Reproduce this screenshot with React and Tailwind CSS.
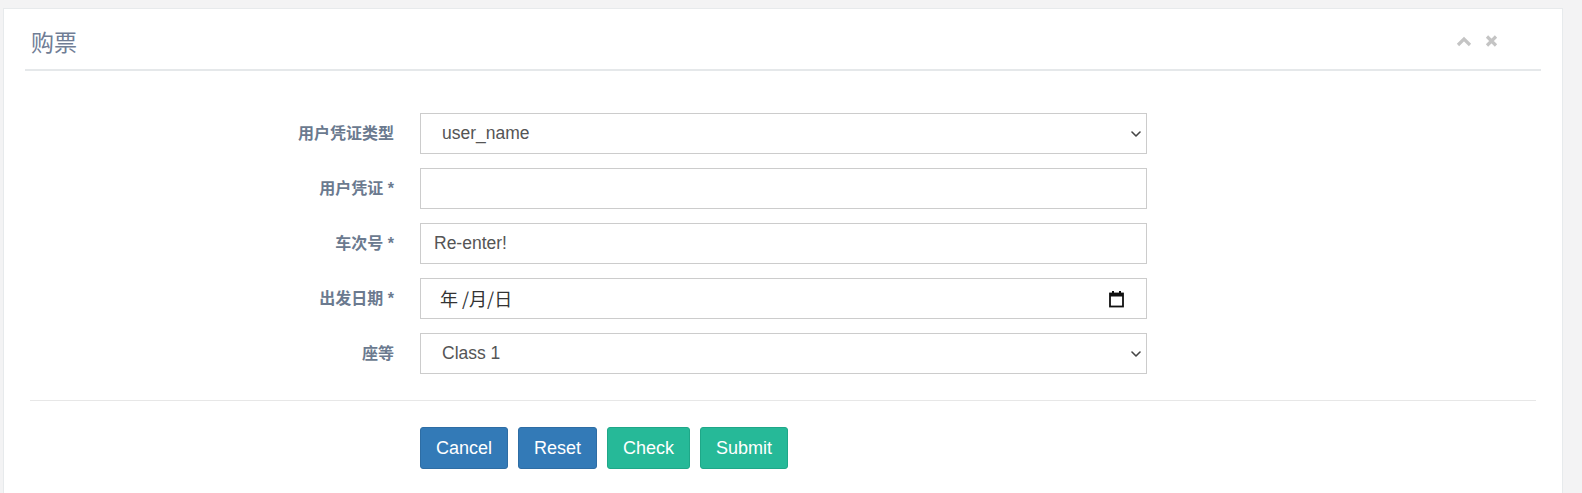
import React from "react";

const Chevron = () => (
  <svg width="10" height="6" viewBox="0 0 10 6" className="absolute right-[5px] top-1/2 -translate-y-1/2">
    <path d="M1 1 L5 5 L9 1" fill="none" stroke="#444" strokeWidth="1.6" strokeLinecap="round" strokeLinejoin="round" />
  </svg>
);

const Row = ({ label, children }) => (
  <div className="flex items-center">
    <div className="w-[390px] text-right text-[16px] font-bold text-[#6b7a8f]">{label}</div>
    <div className="ml-[26px] w-[727px]">{children}</div>
  </div>
);

const boxCls =
  "relative flex h-[41px] w-full items-center border border-[#cccccc] bg-white text-[17.5px] text-[#555555]";

const btnBlue =
  "h-[42px] rounded-[3px] border border-[#2e6da4] bg-[#337ab7] px-[15px] text-[18px] text-white";
const btnGreen =
  "h-[42px] rounded-[3px] border border-[#1fa788] bg-[#26b998] px-[15px] text-[18px] text-white";

export default function App() {
  return (
    <div
      className="min-h-[493px] bg-[#f3f3f4] pl-[3px] pr-[19px] pt-[8px]"
      style={{ fontFamily: '"Liberation Sans", "Noto Sans CJK SC", sans-serif' }}
    >
      <div className="h-[485px] border border-b-0 border-[#e7eaec] bg-white">
        {/* header */}
        <div className="mx-[21px] flex items-center justify-between border-b-2 border-[#e5e8ea] pb-[13px] pl-[6px] pr-[43px] pt-[17px]">
          <div className="text-[23px] leading-[30px] text-[#6f7d95]" style={{ fontFamily: '"Noto Sans CJK SC", sans-serif' }}>
            购票
          </div>
          <div className="flex items-center gap-[13px]">
            <svg width="16" height="11" viewBox="0 0 16 11">
              <path d="M2 9 L8 3 L14 9" fill="none" stroke="#c4c4c4" strokeWidth="3.2" strokeLinejoin="miter" />
            </svg>
            <svg width="13" height="12" viewBox="0 0 13 12">
              <path d="M2 1.5 L11 10.5 M11 1.5 L2 10.5" fill="none" stroke="#c4c4c4" strokeWidth="3.2" />
            </svg>
          </div>
        </div>

        {/* form */}
        <div className="flex flex-col gap-[14px] pt-[42px]">
          <Row label="用户凭证类型">
            <div className={boxCls}>
              <span className="pl-[21px]">user_name</span>
              <Chevron />
            </div>
          </Row>
          <Row label="用户凭证 *">
            <div className={boxCls}></div>
          </Row>
          <Row label="车次号 *">
            <div className={boxCls}>
              <span className="pl-[13px]">Re-enter!</span>
            </div>
          </Row>
          <Row label="出发日期 *">
            <div className={boxCls}>
              <span className="pl-[19px] text-[18px] text-[#333333]" style={{ fontFamily: '"Noto Sans CJK SC", sans-serif' }}>
                年 /月/日
              </span>
              <svg width="15" height="18" viewBox="0 0 15 18" className="absolute right-[22px] top-1/2 -translate-y-1/2">
                <rect x="1" y="3.5" width="13" height="13" fill="none" stroke="#111" strokeWidth="1.8" />
                <rect x="1" y="3" width="13" height="3.5" fill="#111" />
                <rect x="3" y="1" width="2" height="3" fill="#111" />
                <rect x="10" y="1" width="2" height="3" fill="#111" />
              </svg>
            </div>
          </Row>
          <Row label="座等">
            <div className={boxCls}>
              <span className="pl-[21px]">Class 1</span>
              <Chevron />
            </div>
          </Row>
        </div>

        <div className="mx-[26px] mt-[26px] border-t border-[#e7e7e7]"></div>

        <div className="mt-[26px] flex gap-[10px] pl-[416px]">
          <button className={btnBlue}>Cancel</button>
          <button className={btnBlue}>Reset</button>
          <button className={btnGreen}>Check</button>
          <button className={btnGreen}>Submit</button>
        </div>
      </div>
    </div>
  );
}
